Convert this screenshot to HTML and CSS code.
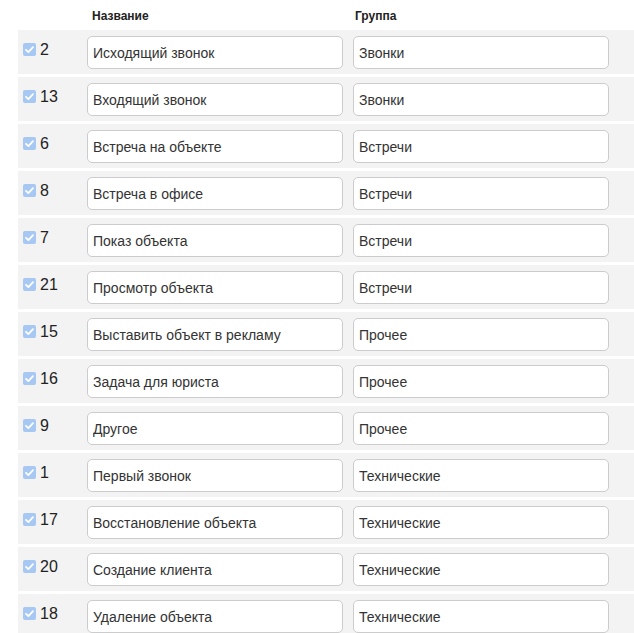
FILE: index.html
```html
<!DOCTYPE html>
<html lang="ru">
<head>
  <meta charset="UTF-8" />
  <meta name="viewport" content="width=device-width, initial-scale=1" />
  <title>Типы задач</title>
  <link rel="stylesheet" href="styles.css">
</head>
<body>
  <div class="list">
    <div class="head">
      <div></div>
      <div class="head-cell">Название</div>
      <div class="head-cell group">Группа</div>
    </div>

    <div class="row">
      <div class="id"><span class="check"><svg viewBox="0 0 13 13"><path d="M3 6.8 L5.4 9.1 L10 4.2"/></svg></span><span class="num">2</span></div>
      <input type="text" class="field" value="Исходящий звонок" />
      <input type="text" class="field" value="Звонки" />
    </div>
    <div class="row">
      <div class="id"><span class="check"><svg viewBox="0 0 13 13"><path d="M3 6.8 L5.4 9.1 L10 4.2"/></svg></span><span class="num">13</span></div>
      <input type="text" class="field" value="Входящий звонок" />
      <input type="text" class="field" value="Звонки" />
    </div>
    <div class="row">
      <div class="id"><span class="check"><svg viewBox="0 0 13 13"><path d="M3 6.8 L5.4 9.1 L10 4.2"/></svg></span><span class="num">6</span></div>
      <input type="text" class="field" value="Встреча на объекте" />
      <input type="text" class="field" value="Встречи" />
    </div>
    <div class="row">
      <div class="id"><span class="check"><svg viewBox="0 0 13 13"><path d="M3 6.8 L5.4 9.1 L10 4.2"/></svg></span><span class="num">8</span></div>
      <input type="text" class="field" value="Встреча в офисе" />
      <input type="text" class="field" value="Встречи" />
    </div>
    <div class="row">
      <div class="id"><span class="check"><svg viewBox="0 0 13 13"><path d="M3 6.8 L5.4 9.1 L10 4.2"/></svg></span><span class="num">7</span></div>
      <input type="text" class="field" value="Показ объекта" />
      <input type="text" class="field" value="Встречи" />
    </div>
    <div class="row">
      <div class="id"><span class="check"><svg viewBox="0 0 13 13"><path d="M3 6.8 L5.4 9.1 L10 4.2"/></svg></span><span class="num">21</span></div>
      <input type="text" class="field" value="Просмотр объекта" />
      <input type="text" class="field" value="Встречи" />
    </div>
    <div class="row">
      <div class="id"><span class="check"><svg viewBox="0 0 13 13"><path d="M3 6.8 L5.4 9.1 L10 4.2"/></svg></span><span class="num">15</span></div>
      <input type="text" class="field" value="Выставить объект в рекламу" />
      <input type="text" class="field" value="Прочее" />
    </div>
    <div class="row">
      <div class="id"><span class="check"><svg viewBox="0 0 13 13"><path d="M3 6.8 L5.4 9.1 L10 4.2"/></svg></span><span class="num">16</span></div>
      <input type="text" class="field" value="Задача для юриста" />
      <input type="text" class="field" value="Прочее" />
    </div>
    <div class="row">
      <div class="id"><span class="check"><svg viewBox="0 0 13 13"><path d="M3 6.8 L5.4 9.1 L10 4.2"/></svg></span><span class="num">9</span></div>
      <input type="text" class="field" value="Другое" />
      <input type="text" class="field" value="Прочее" />
    </div>
    <div class="row">
      <div class="id"><span class="check"><svg viewBox="0 0 13 13"><path d="M3 6.8 L5.4 9.1 L10 4.2"/></svg></span><span class="num">1</span></div>
      <input type="text" class="field" value="Первый звонок" />
      <input type="text" class="field" value="Технические" />
    </div>
    <div class="row">
      <div class="id"><span class="check"><svg viewBox="0 0 13 13"><path d="M3 6.8 L5.4 9.1 L10 4.2"/></svg></span><span class="num">17</span></div>
      <input type="text" class="field" value="Восстановление объекта" />
      <input type="text" class="field" value="Технические" />
    </div>
    <div class="row">
      <div class="id"><span class="check"><svg viewBox="0 0 13 13"><path d="M3 6.8 L5.4 9.1 L10 4.2"/></svg></span><span class="num">20</span></div>
      <input type="text" class="field" value="Создание клиента" />
      <input type="text" class="field" value="Технические" />
    </div>
    <div class="row">
      <div class="id"><span class="check"><svg viewBox="0 0 13 13"><path d="M3 6.8 L5.4 9.1 L10 4.2"/></svg></span><span class="num">18</span></div>
      <input type="text" class="field" value="Удаление объекта" />
      <input type="text" class="field" value="Технические" />
    </div>
  </div>
</body>
</html>
```

FILE: styles.css
```css
body {
  margin: 0;
  background: #fff;
  font-family: 'Liberation Sans', Arial, sans-serif;
  color: #333;
}

.list {
  padding-left: 18px;
}

.head,
.row {
  display: grid;
  grid-template-columns: 59px 256px 256px;
  column-gap: 10px;
}

.head {
  padding: 7px 0 5px;
}
.head-cell {
  font-size: 12px;
  font-weight: bold;
  line-height: 18px;
  color: #222;
  padding-left: 5px;
}
.head-cell.group {
  padding-left: 2px;
}

.row {
  background: #f3f3f3;
  padding: 6px 0 5px;
  margin-bottom: 3px;
}

.id {
  display: flex;
  align-items: flex-start;
}
.check {
  width: 13px;
  height: 13px;
  margin: 7px 4px 0 5px;
  border-radius: 2px;
  background: #a6c8f2;
}
.check svg {
  display: block;
  width: 13px;
  height: 13px;
  fill: none;
  stroke: #fff;
  stroke-width: 1.8;
  stroke-linecap: round;
  stroke-linejoin: round;
}
.num {
  margin-top: 5px;
  font-size: 16px;
  color: #222;
}

.field {
  box-sizing: border-box;
  height: 33px;
  width: 100%;
  margin: 0;
  padding: 0 5px;
  border: 1px solid #ccc;
  border-radius: 5px;
  background: #fff;
  font-family: 'Liberation Sans', Arial, sans-serif;
  font-size: 14px;
  color: #333;
  outline: none;
}
```
